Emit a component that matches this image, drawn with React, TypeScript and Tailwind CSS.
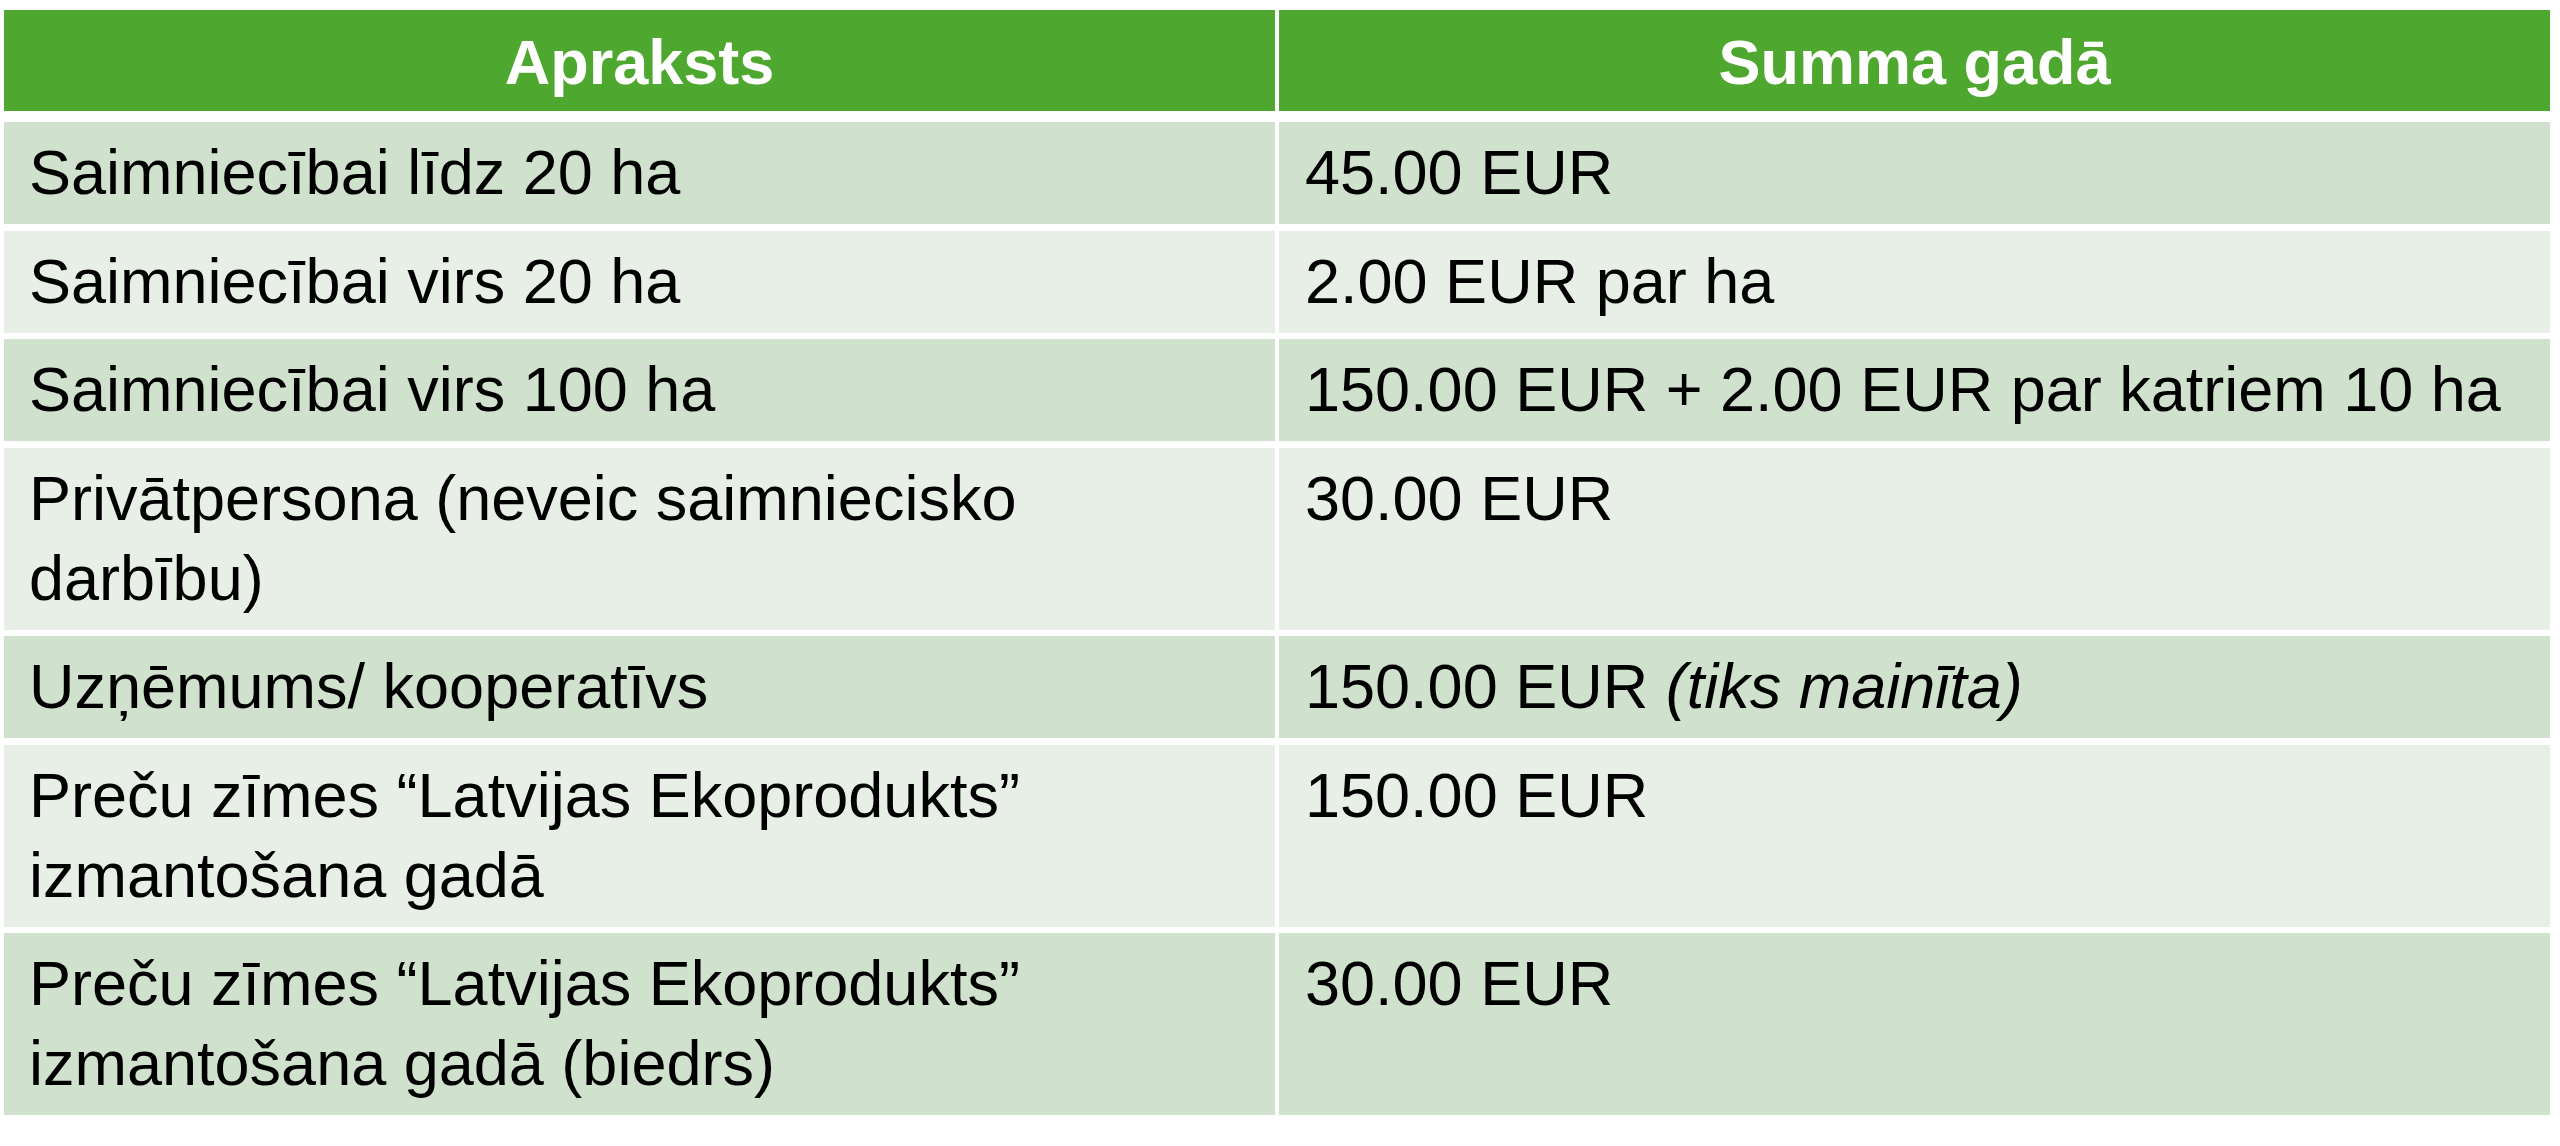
import React from "react";

type Row = { a: React.ReactNode; b: React.ReactNode; dark: boolean };

const rows: Row[] = [
  { a: "Saimniecībai līdz 20 ha", b: "45.00 EUR", dark: true },
  { a: "Saimniecībai virs 20 ha", b: "2.00 EUR par ha", dark: false },
  { a: "Saimniecībai virs 100 ha", b: "150.00 EUR + 2.00 EUR par katriem 10 ha", dark: true },
  {
    a: (
      <>
        Privātpersona (neveic saimniecisko
        <br />
        darbību)
      </>
    ),
    b: "30.00 EUR",
    dark: false,
  },
  {
    a: "Uzņēmums/ kooperatīvs",
    b: (
      <>
        150.00 EUR <span className="italic">(tiks mainīta)</span>
      </>
    ),
    dark: true,
  },
  {
    a: (
      <>
        Preču zīmes “Latvijas Ekoprodukts”
        <br />
        izmantošana gadā
      </>
    ),
    b: "150.00 EUR",
    dark: false,
  },
  {
    a: (
      <>
        Preču zīmes “Latvijas Ekoprodukts”
        <br />
        izmantošana gadā (biedrs)
      </>
    ),
    b: "30.00 EUR",
    dark: true,
  },
];

export default function App() {
  return (
    <div
      className="w-[2560px] h-[1146px] bg-white pt-[10px] pl-[4px] overflow-hidden"
      style={{ fontFamily: "'Liberation Sans', Arial, sans-serif" }}
    >
      <div className="w-[2546px] flex flex-col">
        <div className="grid grid-cols-2 gap-x-[4px] mb-[11px]">
          <div className="bg-[#4EA72E] text-white font-bold text-[63px] leading-[80px] pt-[12px] pb-[9px] text-center">
            Apraksts
          </div>
          <div className="bg-[#4EA72E] text-white font-bold text-[63px] leading-[80px] pt-[12px] pb-[9px] text-center">
            Summa gadā
          </div>
        </div>
        <div className="grid grid-cols-2 gap-x-[4px] gap-y-[6.5px]">
          {rows.map((r, i) => (
            <React.Fragment key={i}>
              <div
                className={`${r.dark ? "bg-[#D0E1CD]" : "bg-[#E8EFE6]"} text-black text-[63px] leading-[80px] pt-[10px] pb-[12px] pl-[25px] pr-[10px] whitespace-nowrap`}
              >
                {r.a}
              </div>
              <div
                className={`${r.dark ? "bg-[#D0E1CD]" : "bg-[#E8EFE6]"} text-black text-[63px] leading-[80px] pt-[10px] pb-[12px] pl-[26px] pr-[10px] whitespace-nowrap`}
              >
                {r.b}
              </div>
            </React.Fragment>
          ))}
        </div>
      </div>
    </div>
  );
}
